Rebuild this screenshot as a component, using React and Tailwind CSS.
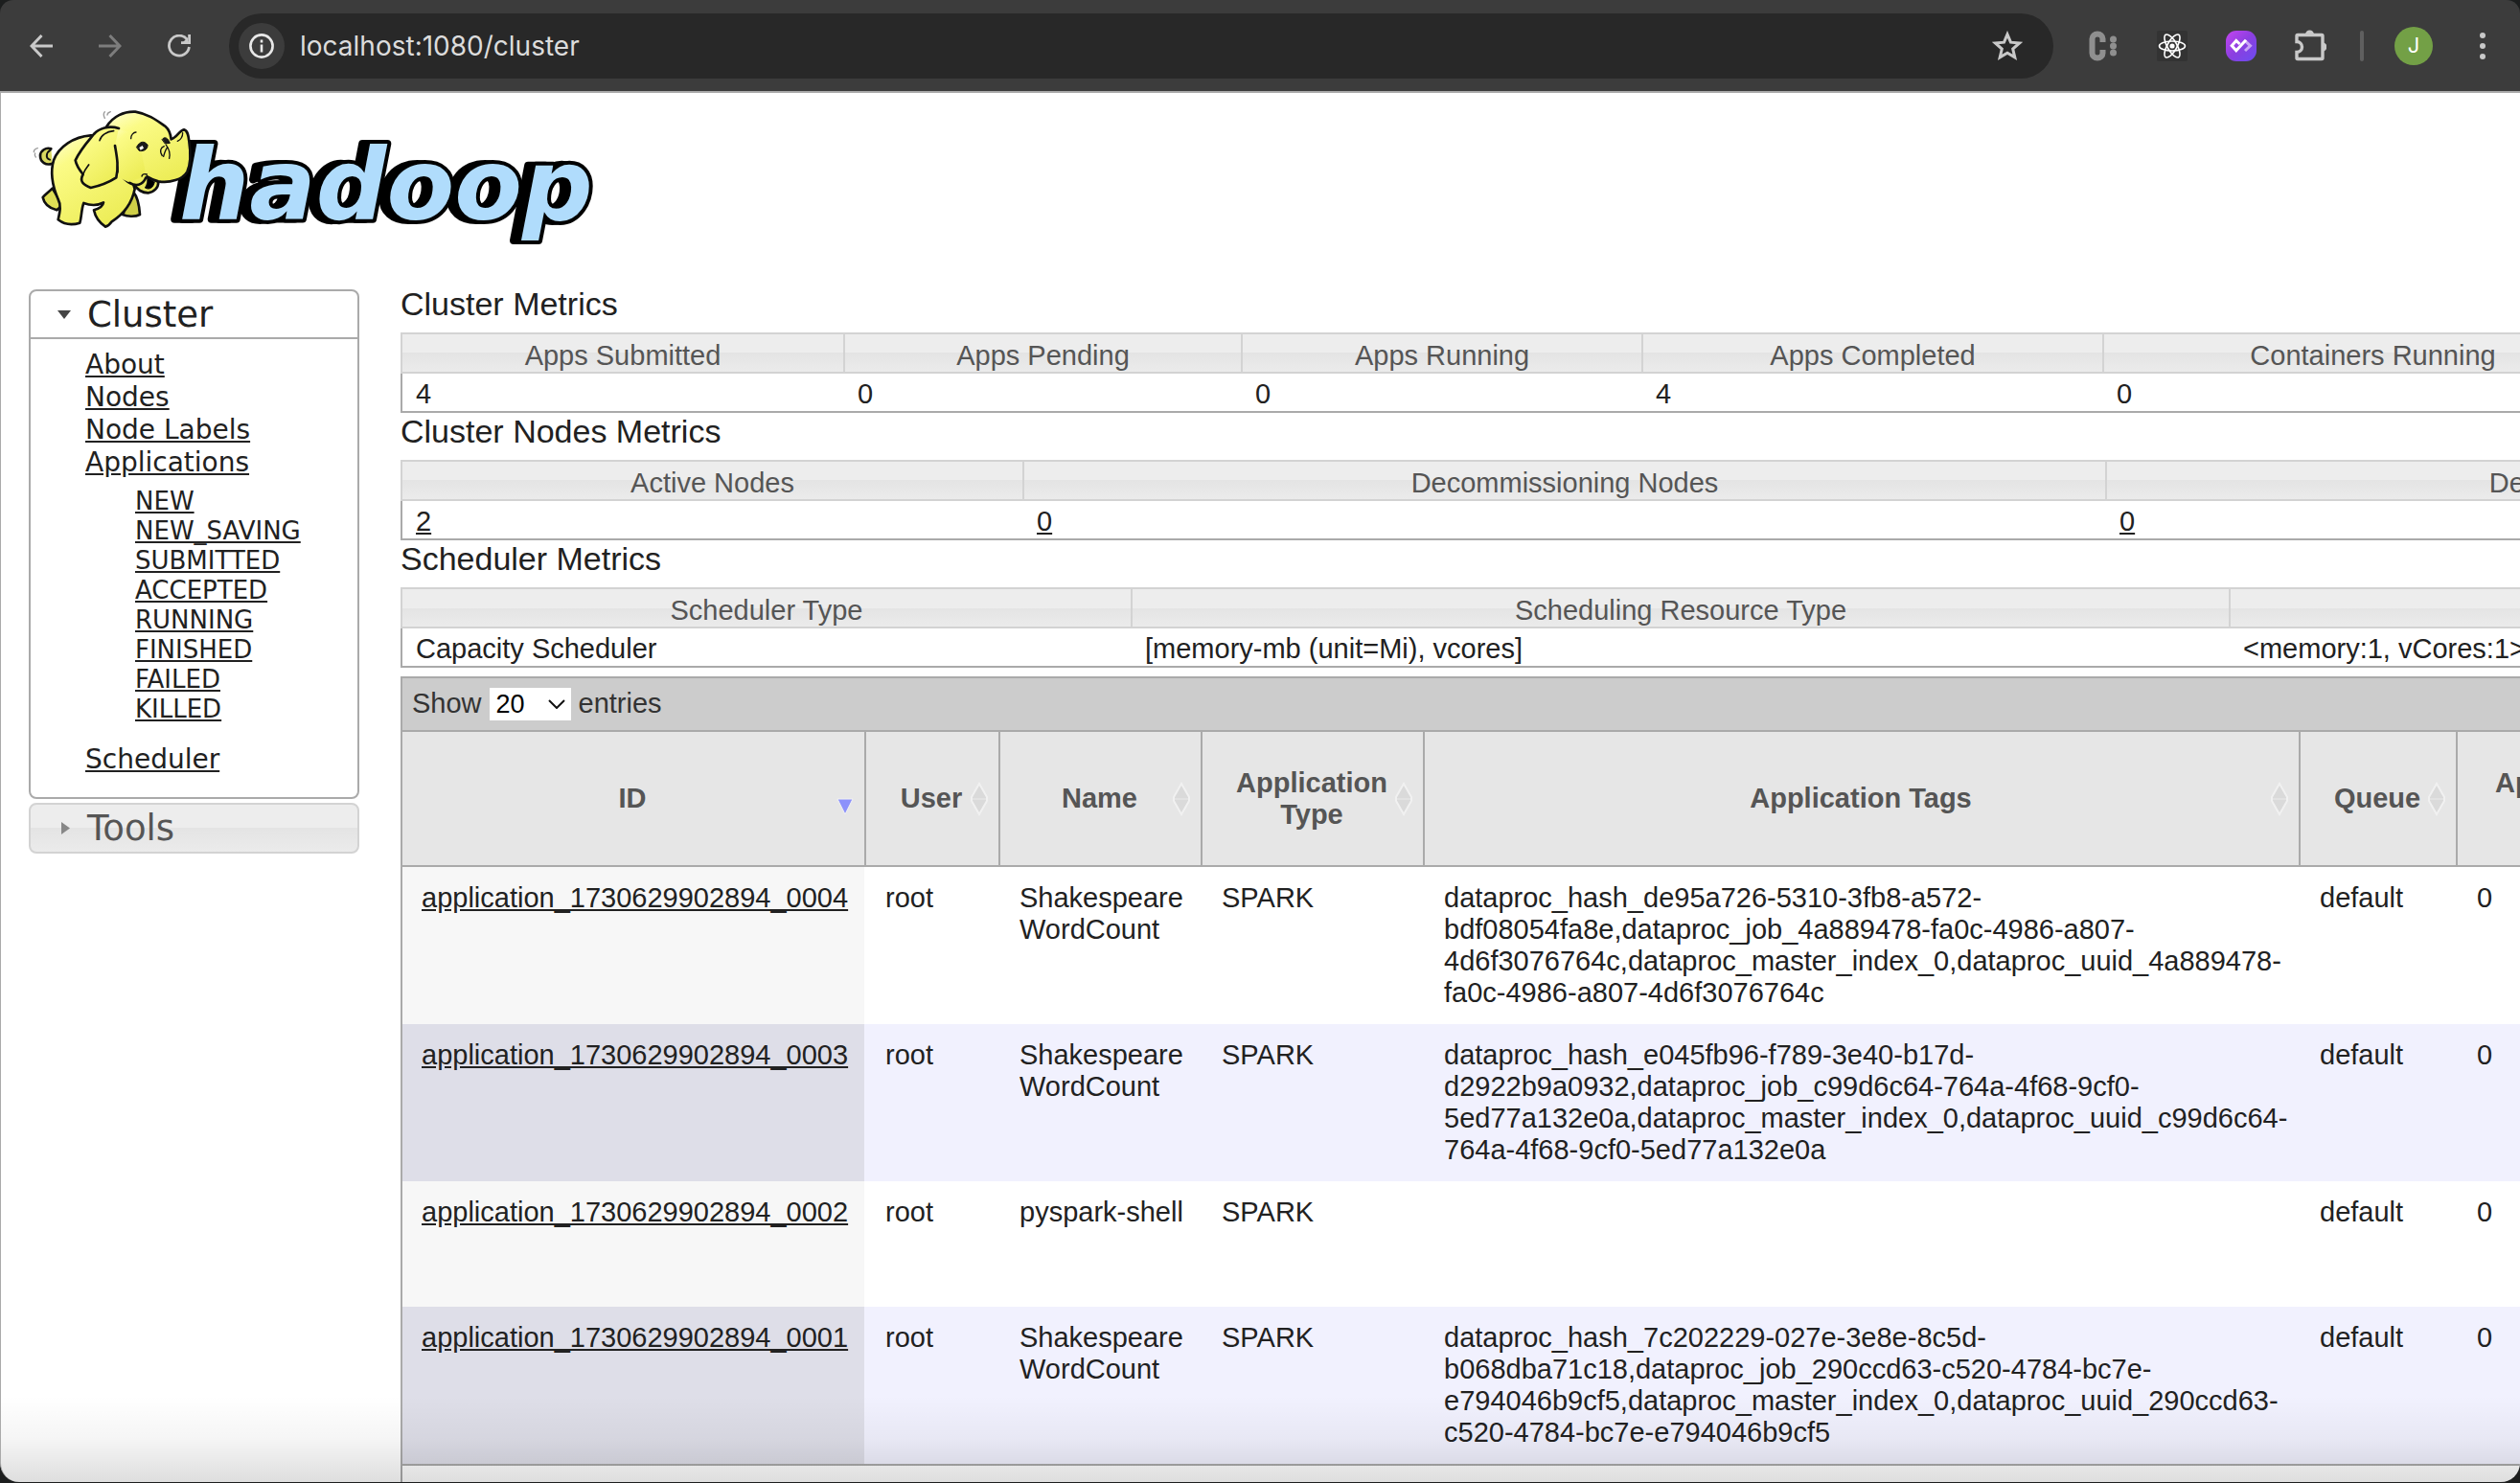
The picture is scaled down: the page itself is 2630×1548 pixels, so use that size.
import React from "react";

const ARIAL = "font-['Liberation_Sans',Arial,sans-serif]";
const VERDANA = "font-['DejaVu_Sans',Verdana,sans-serif]";

const appStates = ["NEW", "NEW_SAVING", "SUBMITTED", "ACCEPTED", "RUNNING", "FINISHED", "FAILED", "KILLED"];

const metricTables = [
  {
    title: "Cluster Metrics",
    columns: [
      { label: "Apps Submitted", width: 462, value: "4" },
      { label: "Apps Pending", width: 415, value: "0" },
      { label: "Apps Running", width: 418, value: "0" },
      { label: "Apps Completed", width: 481, value: "4" },
      { label: "Containers Running", width: 563, value: "0" },
    ],
  },
  {
    title: "Cluster Nodes Metrics",
    columns: [
      { label: "Active Nodes", width: 649, value: "2", link: true },
      { label: "Decommissioning Nodes", width: 1130, value: "0", link: true },
      { label: "Decommissioned Nodes", width: 1114, value: "0", link: true },
    ],
  },
  {
    title: "Scheduler Metrics",
    columns: [
      { label: "Scheduler Type", width: 762, value: "Capacity Scheduler" },
      { label: "Scheduling Resource Type", width: 1146, value: "[memory-mb (unit=Mi), vcores]" },
      { label: "Minimum Allocation", width: 1000, value: "<memory:1, vCores:1>" },
    ],
  },
];

const appColumns = [
  { label: ["ID"], width: 484, sorted: true },
  { label: ["User"], width: 140 },
  { label: ["Name"], width: 211 },
  { label: ["Application", "Type"], width: 232 },
  { label: ["Application Tags"], width: 914 },
  { label: ["Queue"], width: 164 },
  { label: ["Application", "Priority"], width: 240 },
];

const apps = [
  {
    id: "application_1730629902894_0004",
    name: ["Shakespeare", "WordCount"],
    tags: [
      "dataproc_hash_de95a726-5310-3fb8-a572-",
      "bdf08054fa8e,dataproc_job_4a889478-fa0c-4986-a807-",
      "4d6f3076764c,dataproc_master_index_0,dataproc_uuid_4a889478-",
      "fa0c-4986-a807-4d6f3076764c",
    ],
  },
  {
    id: "application_1730629902894_0003",
    name: ["Shakespeare", "WordCount"],
    tags: [
      "dataproc_hash_e045fb96-f789-3e40-b17d-",
      "d2922b9a0932,dataproc_job_c99d6c64-764a-4f68-9cf0-",
      "5ed77a132e0a,dataproc_master_index_0,dataproc_uuid_c99d6c64-",
      "764a-4f68-9cf0-5ed77a132e0a",
    ],
  },
  { id: "application_1730629902894_0002", name: ["pyspark-shell"], tags: [] },
  {
    id: "application_1730629902894_0001",
    name: ["Shakespeare", "WordCount"],
    tags: [
      "dataproc_hash_7c202229-027e-3e8e-8c5d-",
      "b068dba71c18,dataproc_job_290ccd63-c520-4784-bc7e-",
      "e794046b9cf5,dataproc_master_index_0,dataproc_uuid_290ccd63-",
      "c520-4784-bc7e-e794046b9cf5",
    ],
  },
];

function Lines({ items }) {
  return items.map((t, i) => (
    <React.Fragment key={i}>
      {i > 0 && <br />}
      {t}
    </React.Fragment>
  ));
}

function BarButton({ label, children }) {
  return (
    <button type="button" aria-label={label} className="flex size-12 shrink-0 items-center justify-center">
      {children}
    </button>
  );
}

function Toolbar() {
  return (
    <header className="flex h-[97px] shrink-0 items-center rounded-t-[14px] border-b-2 border-[#a9a9a9] bg-[#3c3c3c] pr-[15px] pl-[19px]">
      <nav aria-label="Browser" className="flex gap-6">
        <BarButton label="Back">
          <svg width="24" height="24" viewBox="0 0 24 24" fill="none" stroke="#c9c9c9" strokeWidth="3">
            <path d="M24 12H3M12.5 1 2 12l10.500 11" />
          </svg>
        </BarButton>
        <BarButton label="Forward">
          <svg width="24" height="24" viewBox="0 0 24 24" fill="none" stroke="#7d7d7d" strokeWidth="3">
            <path d="M0 12h21M11.500 1 22 12 11.500 23" />
          </svg>
        </BarButton>
        <BarButton label="Reload">
          <svg width="24" height="24" viewBox="0 0 24 24" fill="none" stroke="#c9c9c9" strokeWidth="2.800">
            <path d="M22.400 13A10.500 10.500 0 1 1 20.500 5.500" />
            <path d="M22.600 0v8.600H14" />
            <path d="M21 3v5h-5z" fill="#c9c9c9" stroke="none" />
          </svg>
        </BarButton>
      </nav>
      <div className="mx-7 flex h-[68px] min-w-0 flex-1 items-center rounded-full bg-[#282828] pr-6 pl-[10px]">
        <button type="button" aria-label="Site information" className="flex size-12 shrink-0 items-center justify-center rounded-full bg-[#3c3c3c]">
          <svg width="26" height="26" viewBox="0 0 26 26" fill="none" stroke="#e8e8e8" strokeWidth="2.600">
            <circle cx="13" cy="13" r="11.600" />
            <path d="M13 11.500v8M13 6.500v3" />
          </svg>
        </button>
        <input
          aria-label="Address"
          defaultValue="localhost:1080/cluster"
          className="ml-4 min-w-0 flex-1 bg-transparent font-['Inter',sans-serif] text-[28px] text-[#dcdcdc] outline-none"
        />
        <BarButton label="Bookmark this page">
          <svg width="32" height="32" viewBox="0 0 32 32" fill="none" stroke="#c9c9c9" strokeWidth="3">
            <path d="M16 3.800l3.500 8.400 9.100.8-6.900 6 2.100 8.900L16 23.200l-7.800 4.700 2.100-8.900-6.900-6 9.100-.8z" />
          </svg>
        </BarButton>
      </div>
      <div className="flex items-center gap-6">
        <BarButton label="Extension C">
          <svg width="30" height="32" viewBox="0 0 30 32">
            <path d="M14.500 12V8.500a5.500 5 0 0 0-11 0v15a5.500 5 0 0 0 11 0V20" fill="none" stroke="#8f8f8f" strokeWidth="6" />
            <g fill="#8f8f8f">
              <circle cx="25.500" cy="9" r="3.500" />
              <circle cx="25.500" cy="16" r="3.500" />
              <circle cx="25.500" cy="23" r="3.500" />
            </g>
          </svg>
        </BarButton>
        <BarButton label="React Developer Tools">
          <svg width="32" height="32" viewBox="0 0 32 32" fill="none" stroke="#fff" strokeWidth="1.600">
            <rect width="32" height="32" rx="2" fill="#333" stroke="none" />
            <ellipse cx="16" cy="16" rx="13.500" ry="5" />
            <ellipse cx="16" cy="16" rx="13.500" ry="5" transform="rotate(60 16 16)" />
            <ellipse cx="16" cy="16" rx="13.500" ry="5" transform="rotate(120 16 16)" />
            <circle cx="16" cy="16" r="2.600" fill="#fff" stroke="none" />
          </svg>
        </BarButton>
        <BarButton label="Purple extension">
          <svg width="32" height="32" viewBox="0 0 32 32" fill="none" strokeWidth="3">
            <defs>
              <linearGradient id="purple" x1="0" y1="0" x2="1" y2="1">
                <stop offset="0" stopColor="#c544f0" />
                <stop offset="0.500" stopColor="#8b3fe0" />
                <stop offset="1" stopColor="#6a4df0" />
              </linearGradient>
            </defs>
            <rect width="32" height="32" rx="11" fill="url(#purple)" />
            <path d="M20 10.500l5.500 5.300L20 21" stroke="#c9a5f5" />
            <path d="M14.500 14l-3.700-3.500-4.600 5.200 4.600 5 10.200-11" stroke="#fff" />
          </svg>
        </BarButton>
        <BarButton label="Extensions">
          <svg width="34" height="34" viewBox="0 0 34 34" fill="none">
            <path d="M4 6h25q1 0 1 1v23q0 1-1 1H4q-1 0-1-1v-6a5.500 5.500 0 0 0 0-11V7q0-1 1-1z" transform="translate(0 -.5)" stroke="#c9c9c9" strokeWidth="3.400" />
            <path d="M12 5a4.500 4.500 0 0 1 9 0zM30 13.500a4.500 4.500 0 0 1 0 9z" fill="#c9c9c9" />
          </svg>
        </BarButton>
      </div>
      <div className="mx-7 h-8 w-1 rounded-full bg-[#5f5f5f]" />
      <button type="button" aria-label="Profile" className="mr-7 ml-1 flex size-10 items-center justify-center rounded-full bg-[#73a046] font-['Inter',sans-serif] text-[22px] text-white">
        J
      </button>
      <BarButton label="Menu">
        <svg width="8" height="30" viewBox="0 0 8 30" fill="#c9c9c9">
          <circle cx="4" cy="4" r="3" />
          <circle cx="4" cy="15" r="3" />
          <circle cx="4" cy="26" r="3" />
        </svg>
      </BarButton>
    </header>
  );
}

function Logo() {
  return (
    <svg width="640" height="170" viewBox="0 0 640 170" role="img" aria-label="hadoop">
      <text
        x="167"
        y="129"
        fill="#b0dcfc"
        stroke="#000"
        strokeWidth="8"
        paintOrder="stroke"
        strokeLinejoin="round"
        className="font-['DejaVu_Sans',Verdana,sans-serif] text-[103px] font-bold italic drop-shadow-[-8px_0_0_#000]"
      >
        hadoop
      </text>
      <defs>
        <linearGradient id="hide" x1="0" y1="0" x2="0.600" y2="1">
          <stop offset="0" stopColor="#ffffd8" />
          <stop offset="0.300" stopColor="#fbfb86" />
          <stop offset="1" stopColor="#eded58" />
        </linearGradient>
      </defs>
      <g transform="translate(4 4) scale(.3333)" stroke="#111" strokeWidth="8" strokeLinejoin="round" strokeLinecap="round" fill="url(#hide)">
        <path d="M92 200C72 208 54 195 54 176C54 160 72 148 88 154" fill="#d9d960" />
        <path d="M86 158C72 166 70 184 84 188" fill="none" strokeWidth="6" />
        <path d="M92 278C80 290 68 298 62 306C66 326 82 340 106 346L124 330Z" fill="#dede55" />
        <path d="M346 290C360 306 364 330 366 360C350 368 326 366 312 360Z" fill="#cfcf48" />
        <path d="M212 112C160 116 112 146 96 190C84 230 92 270 110 312C120 330 116 350 110 376C128 390 154 394 178 386C184 366 182 346 190 324C212 332 234 332 252 322C250 336 236 342 222 346C226 366 240 386 258 398C268 396 274 388 278 382C310 362 340 330 350 280L330 210L270 110Z" />
        <path d="M350 266C356 282 374 292 392 292C410 290 424 276 424 258L388 236Z" fill="#e8e860" />
        <path d="M388 240C392 256 388 266 382 276C396 284 408 276 412 258Z" fill="#000" strokeWidth="3" />
        <path d="M262 84C282 52 316 36 352 38C396 46 420 66 446 84C458 94 462 108 464 124C482 118 490 96 504 94C516 98 518 112 520 130C526 170 526 200 514 226C500 250 460 262 424 256C408 252 396 246 386 240C380 262 362 270 346 266C318 256 300 232 292 200Z" />
        <path d="M262 88L296 140L300 244L330 258L386 240L372 170L330 100Z" stroke="none" />
        <path d="M300 90C268 80 238 90 222 108C206 128 182 152 164 190C168 210 178 222 188 234C176 256 188 266 212 276C240 270 270 258 292 244C300 206 294 180 288 144" />
        <path d="M188 234C196 214 202 210 206 204M240 128C244 112 262 100 284 98" fill="none" strokeWidth="5" />
        <path d="M338 122C338 110 346 102 354 102M436 176C426 160 432 150 442 146M458 184C462 166 456 152 448 142M440 178C444 164 446 156 452 150M484 130C496 124 500 114 500 104M372 240C374 232 380 232 388 234" fill="none" strokeWidth="4" />
        <path d="M356 148C366 130 380 128 390 142C392 158 372 164 364 160Z" fill="#1a1a1a" strokeWidth="3" />
        <path d="M364 150l10-6 4 8-10 6z" fill="#fff" stroke="none" />
        <path d="M436 124C444 114 454 120 460 136L446 138Z" fill="#1a1a1a" strokeWidth="3" />
        <path d="M256 58C252 50 252 42 256 38M264 48C264 42 268 40 274 38M34 164C34 158 38 154 46 152M40 180C36 176 36 172 38 168" fill="none" stroke="#999" strokeWidth="4" />
      </g>
    </svg>
  );
}

function Sidebar() {
  return (
    <nav aria-label="Cluster navigation" className={`mt-1 w-[345px] shrink-0 ${VERDANA}`}>
      <section className="rounded-lg border-2 border-[#aaaaaa]">
        <h3 className="border-b-2 border-[#aaaaaa]">
          <button type="button" className="flex h-12 w-full items-center pt-px pl-7 text-[37px] text-[#212121]">
            <svg width="14" height="9" viewBox="0 0 14 9" className="mr-[17px]"><path d="M0 0h14L7 9z" fill="#454545" /></svg>
            Cluster
          </button>
        </h3>
        <ul className="pt-[10px] pb-[22px] pl-[57px] text-[28px] leading-[34px] text-[#212121]">
          {["About", "Nodes", "Node Labels"].map((t) => (
            <li key={t}><a href="#" className="underline">{t}</a></li>
          ))}
          <li>
            <a href="#" className="underline">Applications</a>
            <ul className="pt-2 pb-5 pl-[52px] text-[26px] leading-[31px]">
              {appStates.map((t) => (
                <li key={t}><a href="#" className="underline">{t}</a></li>
              ))}
            </ul>
          </li>
          <li><a href="#" className="underline">Scheduler</a></li>
        </ul>
      </section>
      <h3 className="mt-1">
        <button type="button" className="flex h-[53px] w-full items-center rounded-lg border-2 border-[#d3d3d3] bg-[linear-gradient(#ededed_50%,#e4e4e4_50%,#ebebeb)] pl-8 text-[37px] text-[#555555]">
          <svg width="9" height="13" viewBox="0 0 9 13" className="mr-[18px]"><path d="M0 0v13l9-6.500z" fill="#888" /></svg>
          Tools
        </button>
      </h3>
    </nav>
  );
}

function MetricTable({ title, columns }) {
  const total = columns.reduce((s, c) => s + c.width, 0);
  return (
    <section>
      <h3 className="mb-[11px] text-[34px] leading-[38px] text-[#212121]">{title}</h3>
      <table className="table-fixed border-separate border-spacing-0 text-[29px] leading-[33px]" style={{ width: total }}>
        <colgroup>{columns.map((c) => <col key={c.label} style={{ width: c.width }} />)}</colgroup>
        <thead>
          <tr>
            {columns.map((c) => (
              <th key={c.label} scope="col" className="border-y-2 border-l-2 border-[#d3d3d3] bg-[linear-gradient(#ededed_50%,#e4e4e4_50%,#ebebeb)] px-[14px] pt-[6px] text-center font-normal text-[#555555]">{c.label}</th>
            ))}
          </tr>
        </thead>
        <tbody>
          <tr>
            {columns.map((c) => (
              <td key={c.label} className="border-b-2 border-[#aaaaaa] pt-[5px] pb-px pl-[15px] text-[#212121] first:border-l-2 first:pl-[14px]">
                {c.link ? <a href="#" className="underline">{c.value}</a> : c.value}
              </td>
            ))}
          </tr>
        </tbody>
      </table>
    </section>
  );
}

function SortMark({ sorted }) {
  return (
    <svg width="20" height="36" viewBox="0 0 20 36" className="justify-self-end" aria-hidden="true">
      {sorted ? (
        <path d="M2 18h16l-8 16z" fill="#8c92fb" stroke="#f3f3f3" strokeWidth="1" />
      ) : (
        <>
          <path d="M10 2 18 16v4l-8 14L2 20v-4z" fill="#dadada" stroke="#f1f1f1" strokeWidth="2" />
          <path d="M3 18h14" stroke="#e2e2e2" strokeWidth="2" />
        </>
      )}
    </svg>
  );
}

function AppsTable() {
  const total = appColumns.reduce((s, c) => s + c.width, 0);
  return (
    <section className="mt-[9px] flex flex-1 flex-col border-t-2 border-l-2 border-[#aaaaaa]">
      <div className="flex h-14 shrink-0 items-center gap-2 border-b-2 border-[#aaaaaa] bg-[#cccccc] pl-[10px] text-[29px] text-[#333333]">
        <label htmlFor="page-size">Show</label>
        <div className="grid items-center">
          <select id="page-size" defaultValue="20" className="col-start-1 row-start-1 h-[34px] w-[85px] appearance-none bg-white pl-[7px] text-[27px] leading-[34px] text-black">
            <option>20</option>
            <option>40</option>
            <option>60</option>
            <option>80</option>
            <option>100</option>
          </select>
          <svg width="18" height="10" viewBox="0 0 18 10" className="pointer-events-none col-start-1 row-start-1 mr-[6px] justify-self-end" fill="none" stroke="#111" strokeWidth="2">
            <path d="M1 1l8 8 8-8" />
          </svg>
        </div>
        <span>entries</span>
      </div>
      <table className="-ml-[2px] table-fixed border-separate border-spacing-0 text-[29px] leading-[33px]" style={{ width: total }}>
        <colgroup>{appColumns.map((c) => <col key={c.label.join(" ")} style={{ width: c.width }} />)}</colgroup>
        <thead>
          <tr>
            {appColumns.map((c) => (
              <th key={c.label.join(" ")} scope="col" className="h-[141px] border-b-2 border-l-2 border-[#aaaaaa] bg-[#e6e6e6] p-0 font-bold text-[#555555]">
                <button type="button" className="grid w-full grid-cols-[1fr_auto_1fr] items-center pr-[10px] pl-2">
                  <span />
                  <span className="text-center whitespace-nowrap"><Lines items={c.label} /></span>
                  <SortMark sorted={c.sorted} />
                </button>
              </th>
            ))}
          </tr>
        </thead>
        <tbody>
          {apps.map((a, i) => {
            const cell = `py-4 pl-[22px] align-top ${i % 2 ? "bg-[#f1f1fe]" : "bg-white"}`;
            return (
              <tr key={a.id} className="h-[131px] text-[#212121]">
                <td className={`border-l-2 border-[#aaaaaa] py-4 pl-5 align-top ${i % 2 ? "bg-[#dedee8]" : "bg-[#f7f7f7]"}`}>
                  <a href="#" className="underline">{a.id}</a>
                </td>
                <td className={cell}>root</td>
                <td className={`${cell} whitespace-nowrap`}><Lines items={a.name} /></td>
                <td className={cell}>SPARK</td>
                <td className={`${cell} whitespace-nowrap`}><Lines items={a.tags} /></td>
                <td className={cell}>default</td>
                <td className={cell}>0</td>
              </tr>
            );
          })}
        </tbody>
      </table>
      <div className="flex-1 border-t-2 border-[#aaaaaa]" />
    </section>
  );
}

export default function App() {
  return (
    <div className={`flex h-screen flex-col overflow-hidden bg-[#1c1e1e] pb-px ${ARIAL}`}>
      <Toolbar />
      <div className="relative flex min-h-0 flex-1 flex-col overflow-hidden rounded-b-[20px] border-l border-[#aaaaaa] bg-white">
        <a href="#" className="ml-[19px] h-[173px] w-[640px] shrink-0 pt-[3px]" aria-label="Hadoop home">
          <Logo />
        </a>
        <div className="flex min-h-0 flex-1 items-stretch gap-[43px] pt-7 pl-[29px]">
          <Sidebar />
          <main className="flex min-w-0 flex-1 flex-col overflow-hidden">
            {metricTables.map((t) => (
              <MetricTable key={t.title} {...t} />
            ))}
            <AppsTable />
          </main>
        </div>
        <div className="pointer-events-none absolute inset-x-0 bottom-0 h-[90px] bg-[linear-gradient(transparent,rgba(0,0,0,0.04)_50%,rgba(0,0,0,0.13))]" />
      </div>
    </div>
  );
}
